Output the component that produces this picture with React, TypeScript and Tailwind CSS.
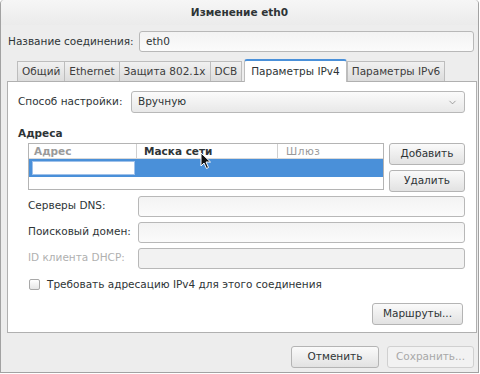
import { ChevronDown } from 'lucide-react';

const font = { fontFamily: '"DejaVu Sans", "Noto Sans", sans-serif' };

function Entry({ className = '', value = '', disabled = false }: { className?: string; value?: string; disabled?: boolean }) {
  return (
    <div
      className={`h-[21px] rounded-[3px] border border-[#b8b8b8] flex items-center px-[6px] text-[10.5px] text-[#2e3436] ${
        disabled ? 'bg-[#f2f2f2]' : 'bg-gradient-to-b from-[#f3f3f3] to-[#fbfbfb]'
      } ${className}`}
    >
      {value}
    </div>
  );
}

function Button({ label, className = '', disabled = false }: { label: string; className?: string; disabled?: boolean }) {
  return (
    <div
      className={`h-[22px] rounded-[3px] border flex items-center justify-center text-[10.5px] ${
        disabled
          ? 'border-[#d0d0d0] bg-[#f2f2f2] text-[#a8a8a8]'
          : 'border-[#b4b4b4] bg-gradient-to-b from-[#fafafa] to-[#e2e2e2] text-[#2e3436]'
      } ${className}`}
    >
      {label}
    </div>
  );
}

const tabs = ['Общий', 'Ethernet', 'Защита 802.1x', 'DCB'];

export default function App() {
  return (
    <div className="w-[480px] h-[374px] overflow-hidden bg-white" style={font}>
      <div className="relative w-[479px] h-[373px] rounded-t-[4px] border-x border-b border-[#a2a2a2] bg-[#ededed] flex flex-col">
        {/* title bar */}
        <div className="h-[25px] shrink-0 rounded-t-[4px] bg-gradient-to-b from-[#f6f6f6] to-[#ebebeb] flex items-center justify-center pt-px text-[10.5px] font-bold text-[#2e3436]">
          Изменение eth0
        </div>

        {/* connection name */}
        <div className="mt-[6px] pl-[7px] pr-[4px] flex items-center">
          <span className="w-[131px] text-[10.5px] text-[#2e3436]">Название соединения:</span>
          <Entry className="flex-1 !bg-white" value="eth0" />
        </div>

        {/* tabs */}
        <div className="mt-[7px] ml-[16px] flex items-end h-[22px]">
          {tabs.map((t) => (
            <div
              key={t}
              className="h-[20px] px-[4px] border border-b-0 border-[#bdbdbd] -ml-px first:ml-0 bg-gradient-to-b from-[#f1f1f1] to-[#dcdcdc] flex items-center text-[10.5px] text-[#3c3c3c]"
            >
              {t}
            </div>
          ))}
          <div className="relative z-10 h-[23px] px-[6px] ml-[2px] -mb-px rounded-t-[3px] border border-b-0 border-[#bdbdbd] border-t-[#4a90d9] border-t-2 bg-white flex items-center text-[10.5px] text-[#2e3436]">
            Параметры IPv4
          </div>
          <div className="h-[20px] px-[4px] border border-b-0 border-[#bdbdbd] bg-gradient-to-b from-[#f1f1f1] to-[#dcdcdc] flex items-center text-[10.5px] text-[#3c3c3c]">
            Параметры IPv6
          </div>
        </div>

        {/* panel */}
        <div className="ml-[6px] mr-[1px] h-[252px] border border-[#b0b0b0] bg-white pt-[9px] pl-[10px] pr-[11px] flex flex-col">
          <div className="flex items-center">
            <span className="w-[113px] text-[10.5px] text-[#2e3436]">Способ настройки:</span>
            <div className="flex-1 h-[22px] rounded-[3px] border border-[#b8b8b8] bg-gradient-to-b from-[#fbfbfb] to-[#e8e8e8] flex items-center justify-between px-[6px] text-[10.5px] text-[#2e3436]">
              Вручную
              <ChevronDown size={11} strokeWidth={1.5} className="text-[#7a7a7a]" />
            </div>
          </div>

          <div className="mt-[13px] text-[10.5px] font-bold text-[#2e3436]">Адреса</div>

          <div className="mt-[1px] ml-[10px] flex gap-[5px]">
            <div className="w-[358px] h-[47px] border border-[#b4b4b4] bg-white flex flex-col">
              <div className="h-[15px] flex text-[10.5px] leading-none border-b border-[#d9d9d9]">
                <div className="w-[108px] pl-[5px] flex items-center text-[#9a9a9a] font-bold border-r border-[#d0d0d0]">Адрес</div>
                <div className="w-[141px] pl-[7px] flex items-center font-bold text-[#2e3436] border-r border-[#d0d0d0]">Маска сети</div>
                <div className="flex-1 pl-[8px] flex items-center text-[#9a9a9a] tracking-[0.5px]">Шлюз</div>
              </div>
              <div className="h-[18px] bg-[#4a90d9] flex items-center pl-[3px]">
                <div className="w-[103px] h-[14px] bg-white border border-[#9fc1ea]" />
              </div>
            </div>
            <div className="flex flex-col gap-[5px]">
              <Button label="Добавить" className="w-[76px]" />
              <Button label="Удалить" className="w-[76px]" />
            </div>
          </div>

          <div className="mt-[4px] ml-[10px] flex flex-col gap-[5px]">
            {[
              ['Серверы DNS:', false],
              ['Поисковый домен:', false],
              ['ID клиента DHCP:', true],
            ].map(([label, dis]) => (
              <div key={label as string} className="flex items-center">
                <span className={`w-[110px] text-[10.5px] ${dis ? 'text-[#b0b0b0]' : 'text-[#2e3436]'}`}>{label as string}</span>
                <Entry className="flex-1" disabled={dis as boolean} />
              </div>
            ))}
          </div>

          <div className="mt-[8px] ml-[11px] flex items-center gap-[7px] text-[10.5px] text-[#2e3436]">
            <div className="w-[11px] h-[11px] rounded-[2px] border border-[#a8a8a8] bg-gradient-to-b from-white to-[#e6e6e6]" />
            Требовать адресацию IPv4 для этого соединения
          </div>

          <div className="mt-[10px] flex justify-end pr-[2px]">
            <Button label="Маршруты..." className="w-[91px]" />
          </div>
        </div>

        {/* bottom buttons */}
        <div className="mt-[13px] flex justify-end gap-[8px] pr-[4px]">
          <Button label="Отменить" className="w-[88px]" />
          <Button label="Сохранить..." className="w-[87px]" disabled />
        </div>

        {/* mouse pointer */}
        <svg className="absolute left-[199px] top-[152px]" width="12" height="18" viewBox="0 0 12 18">
          <path d="M1 1 L1 14 L4 11 L6.5 16.5 L8.5 15.5 L6 10 L10.5 10 Z" fill="#111" stroke="#fff" strokeWidth="1" />
        </svg>
      </div>
    </div>
  );
}
